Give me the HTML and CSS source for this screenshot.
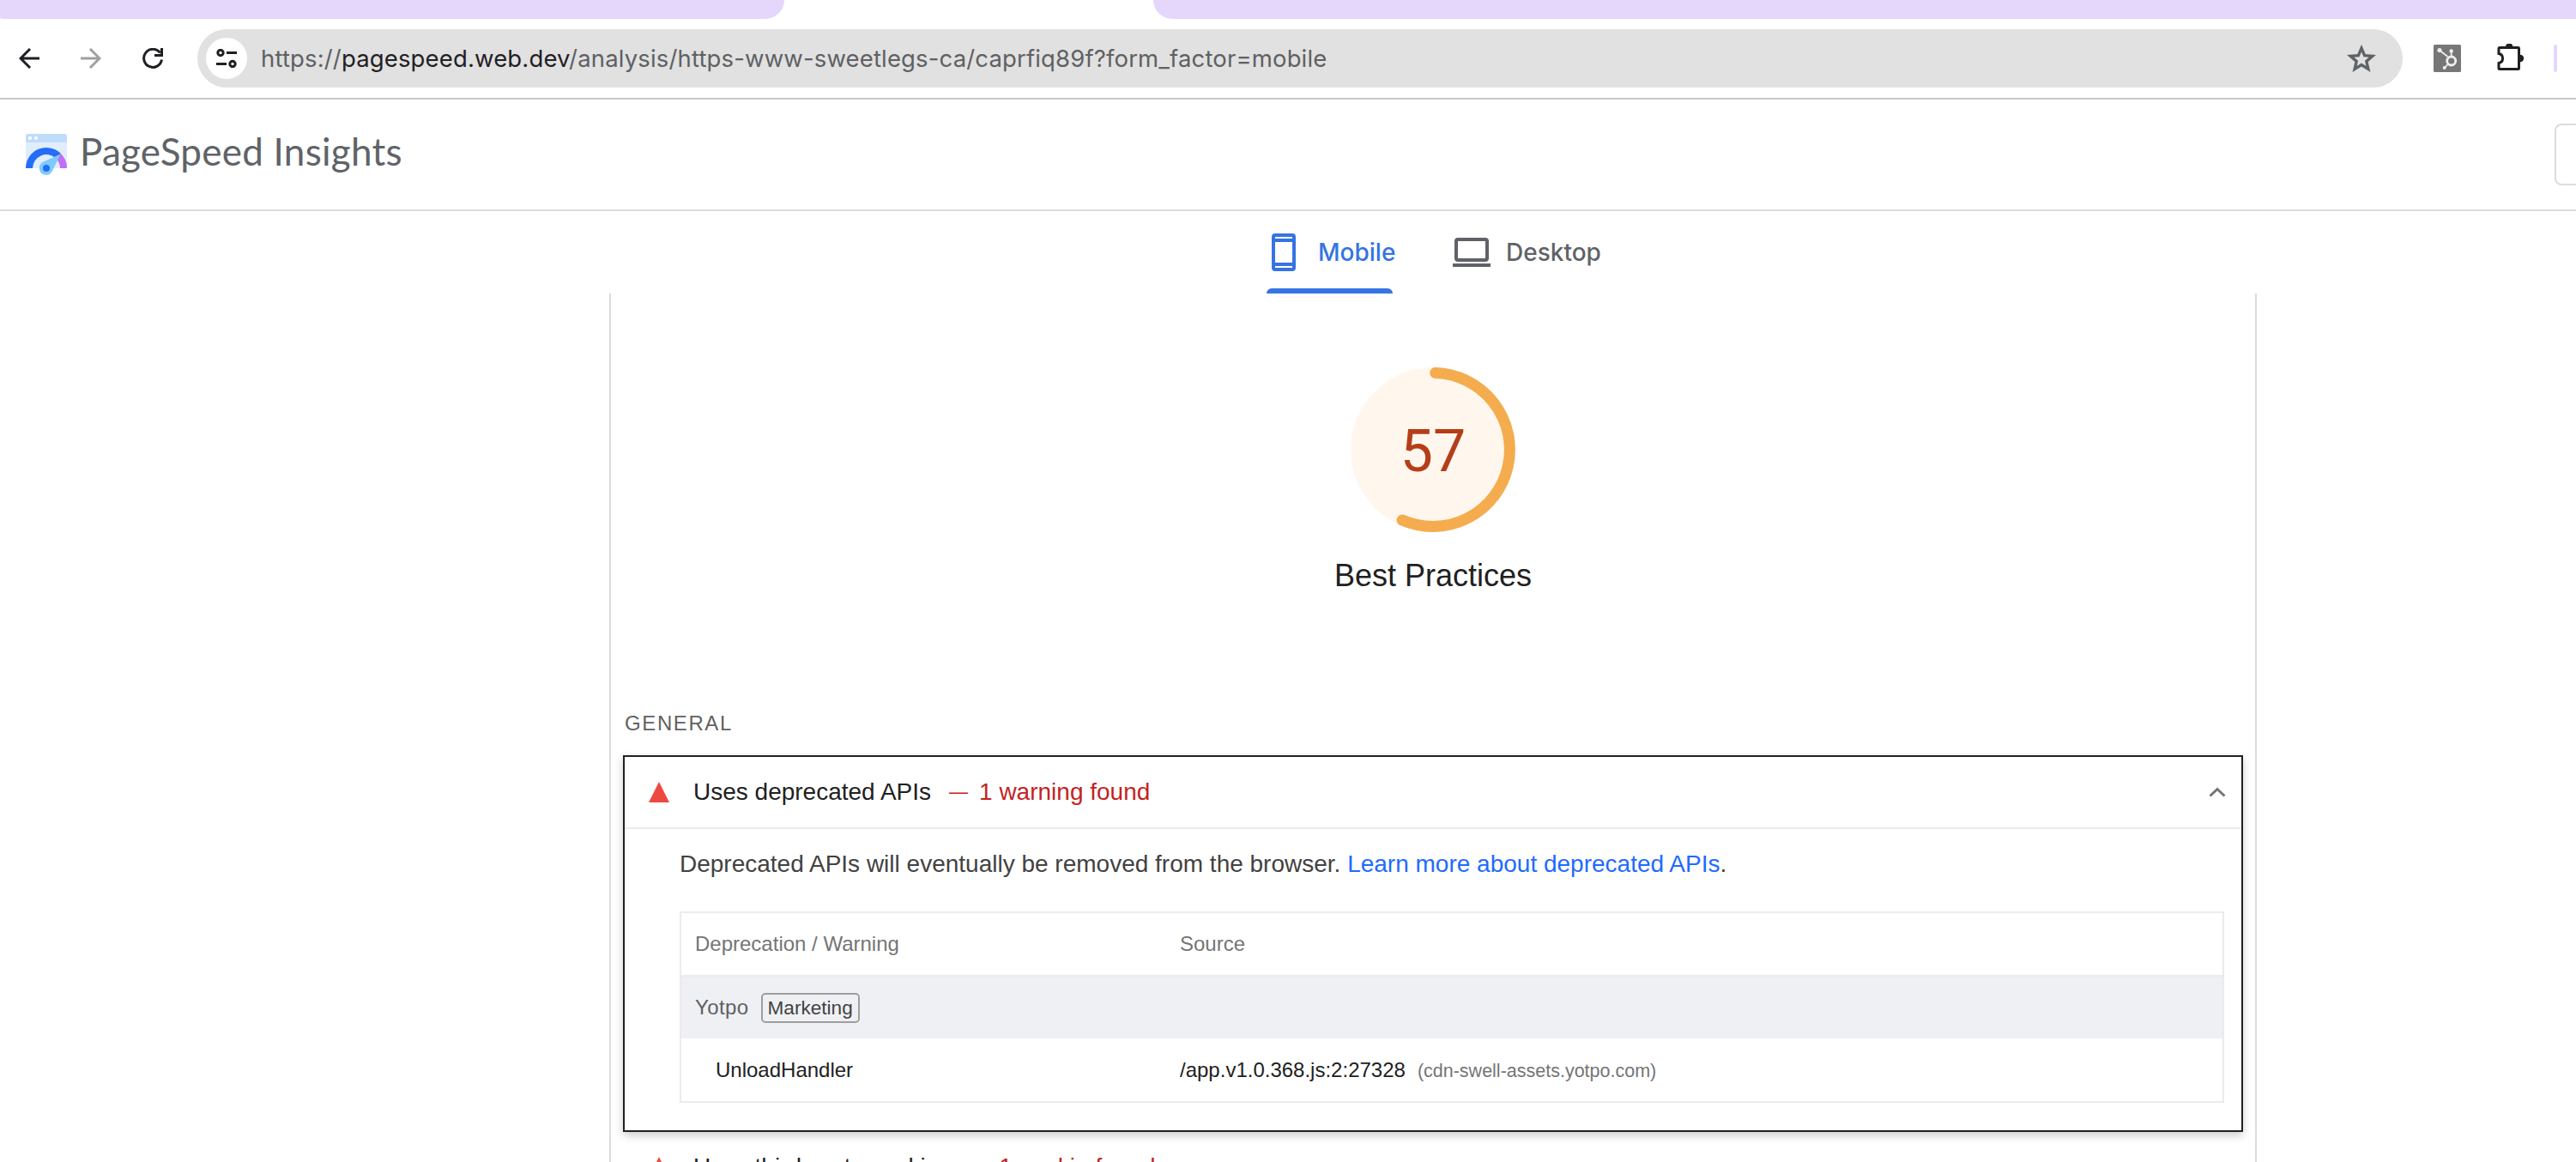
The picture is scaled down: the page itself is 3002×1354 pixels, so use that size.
FILE: index.html
```html
<!DOCTYPE html>
<html lang="en">

<head>
	<meta charset="UTF-8">
	<meta name="viewport" content="width=device-width, initial-scale=1.0">
	<title>PageSpeed Insights</title>
	<link rel="stylesheet" href="styles.css">
</head>

<body>
	<div class="tabstrip">
		<div class="tabstrip-left"></div>
		<div class="tabstrip-right"></div>
	</div>

	<div class="toolbar">
		<svg class="nav-icon" width="24" height="24" viewBox="0 0 24 24" fill="none" stroke="#1f2024" stroke-width="3">
			<path d="M24 12H3M13 1L2 12l11 11" />
		</svg>
		<svg class="nav-icon" width="24" height="24" viewBox="0 0 24 24" fill="none" stroke="#a0a0a1" stroke-width="3">
			<path d="M0 12h21M11 1l11 11-11 11" />
		</svg>
		<svg class="nav-icon" width="24" height="24" viewBox="0 0 24 24" fill="none" stroke="#1f2024" stroke-width="3">
			<path d="M20.500 5.500A10.500 10.500 0 1 0 22.500 13.500" />
			<path d="M22.500 0v8.500H14" />
		</svg>
		<div class="omnibox">
			<div class="site-info">
				<svg width="24" height="22" viewBox="0 0 24 22" fill="none" stroke="#1f2024" stroke-width="3">
					<circle cx="5" cy="4.500" r="3.200" />
					<path d="M12 4.500h12M0 17.500h12" />
					<circle cx="19" cy="17.500" r="3.200" />
				</svg>
			</div>
			<span class="url">https://<b>pagespeed.web.dev</b>/analysis/https-www-sweetlegs-ca/caprfiq89f?form_factor=mobile</span>
			<svg class="star" width="34" height="32" viewBox="0 0 34 32" fill="none" stroke="#5f6368" stroke-width="3.400">
				<path d="M17 4.200l3.600 8.400 9.200.8-7 6 2.100 9-7.900-4.800-7.900 4.800 2.100-9-7-6 9.200-.8z" />
			</svg>
		</div>
		<svg class="hubspot" width="32" height="32" viewBox="0 0 32 32">
			<rect width="32" height="32" rx="1.500" fill="#777" />
			<g fill="none" stroke="#eee" stroke-width="1.800">
				<path d="M7.500 7l9 7M20.700 8v6M16.500 23l-3.500 4" />
				<circle cx="20.700" cy="19" r="5" stroke-width="2.800" />
			</g>
			<g fill="#eee">
				<circle cx="7" cy="6.500" r="2.600" />
				<circle cx="20.700" cy="7.500" r="2.200" />
				<circle cx="12.700" cy="27" r="2" />
			</g>
		</svg>
		<svg class="puzzle" width="34" height="34" viewBox="0 0 34 34">
			<path d="M4 4.500h21.500a1 1 0 0 1 1 1V28.500a1 1 0 0 1-1 1H4a1 1 0 0 1-1-1V22.500a5.600 5.600 0 0 0 0-11V5.500a1 1 0 0 1 1-1z" fill="none" stroke="#1f2024" stroke-width="3" />
			<path d="M11 3.500a4.200 4.200 0 0 1 8.400 0zM28 12.800a4.200 4.200 0 0 1 0 8.400z" fill="#1f2024" />
		</svg>
		<div class="toolbar-divider"></div>
	</div>

	<header class="header">
		<svg class="logo" width="48" height="48" viewBox="0 0 48 48">
			<path d="M0 10h48v30H0z" fill="#e1edfd" />
			<path d="M0 10V3a3 3 0 0 1 3-3h42a3 3 0 0 1 3 3v7z" fill="#c0dcfb" />
			<circle cx="5" cy="5" r="2.100" fill="#fff" />
			<circle cx="12" cy="5" r="2.100" fill="#fff" />
			<path d="M0 40a24 24 0 0 1 41-17l-6 5.500A16 16 0 0 0 8 40z" fill="#246df7" />
			<path d="M40.500 22.500A24 24 0 0 1 48 40h-8a16 16 0 0 0-4-10.600z" fill="#bf6ff8" />
			<path d="M40.500 23.500L20 32.800a8 8 0 1 0 11 10.500z" fill="#7ecbfb" />
			<circle cx="24" cy="40" r="4" fill="#246df7" />
		</svg>
		<h1>PageSpeed Insights</h1>
		<div class="header-button"></div>
	</header>

	<nav class="tabs">
		<div class="tab tab-active">
			<svg width="28" height="44" viewBox="0 0 28 44" fill="none" stroke="currentColor" stroke-width="4">
				<rect x="2" y="2" width="24" height="40" rx="2" />
				<path d="M2 8h24M2 36h24" />
			</svg>
			<span>Mobile</span>
		</div>
		<div class="tab tab-desktop">
			<svg width="44" height="34" viewBox="0 0 44 34" fill="none" stroke="currentColor" stroke-width="4">
				<rect x="4" y="2" width="36" height="24" rx="2" />
				<path d="M0 32h44" />
			</svg>
			<span>Desktop</span>
		</div>
	</nav>

	<main class="report">
		<div class="gauge">
			<svg width="192" height="192" viewBox="0 0 192 192">
				<circle cx="96" cy="96" r="96" fill="#fff7ed" />
				<path d="M98.700 6.500A89.500 89.500 0 1 1 60.100 178" fill="none" stroke="#f4ac4e" stroke-width="13" stroke-linecap="round" />
			</svg>
			<div class="score">57</div>
		</div>
		<h2>Best Practices</h2>

		<h3>GENERAL</h3>

		<section class="audit audit-open">
			<div class="audit-header">
				<span class="fail"></span>
				<span class="title">Uses deprecated APIs</span>
				<span class="dash">—</span>
				<span class="display">1 warning found</span>
				<svg class="chevron" width="20" height="12" viewBox="0 0 20 12" fill="none" stroke="#757575" stroke-width="3">
					<path d="M1.500 10.500L10 2.500l8.500 8" />
				</svg>
			</div>
			<p>Deprecated APIs will eventually be removed from the browser. <a>Learn more about deprecated APIs</a>.</p>
			<div class="table">
				<div class="row row-head">
					<span>Deprecation / Warning</span>
					<span>Source</span>
				</div>
				<div class="row row-entity">
					<div><span class="entity">Yotpo</span><span class="badge">Marketing</span></div>
				</div>
				<div class="row">
					<span class="sub-item">UnloadHandler</span>
					<span><span class="source">/app.v1.0.368.js:2:27328</span><span class="host">(cdn-swell-assets.yotpo.com)</span></span>
				</div>
			</div>
		</section>

		<section class="audit">
			<div class="audit-header">
				<span class="fail"></span>
				<span class="title">Uses third-party cookies</span>
				<span class="dash">—</span>
				<span class="display">1 cookie found</span>
			</div>
		</section>
	</main>
</body>

</html>
```

FILE: styles.css
```css
* {
	margin: 0;
	padding: 0;
	box-sizing: border-box;
}

body {
	width: 3002px;
	height: 1354px;
	overflow: hidden;
	background: #fff;
	color: #212121;
	font-family: 'Liberation Sans', Arial, sans-serif;
	font-size: 28px;
}

svg {
	display: block;
	flex: none;
}

/* browser chrome */
.tabstrip {
	display: flex;
	justify-content: space-between;
	height: 22px;
}

.tabstrip-left,
.tabstrip-right {
	background: #e5d6fb;
}

.tabstrip-left {
	width: 914px;
	border-radius: 0 0 22px 2px;
}

.tabstrip-right {
	width: 1658px;
	border-radius: 0 0 0 22px;
}

.toolbar {
	display: flex;
	align-items: center;
	height: 94px;
	padding-left: 22px;
	border-bottom: 2px solid #c8c8c9;
}

.nav-icon {
	margin-right: 48px;
}

.omnibox {
	display: flex;
	flex: none;
	align-items: center;
	width: 2570px;
	height: 68px;
	margin-left: -8px;
	padding: 0 31px 0 10px;
	border-radius: 34px;
	background: #e1e1e1;
}

.site-info {
	display: flex;
	align-items: center;
	justify-content: center;
	width: 48px;
	height: 48px;
	margin-right: 16px;
	border-radius: 50%;
	background: #fff;
}

.url {
	font-family: Inter, sans-serif;
	font-size: 27.5px;
	letter-spacing: 0.15px;
	color: #5f6063;
	white-space: nowrap;
}

.url b {
	font-weight: 400;
	color: #1f2024;
}

.star {
	margin-left: auto;
}

.hubspot {
	margin-left: 36px;
}

.puzzle {
	margin-left: 41px;
}

.toolbar-divider {
	flex: none;
	width: 4px;
	height: 32px;
	margin-left: 33px;
	border-radius: 2px;
	background: #e5d6fb;
}

/* page header */
.header {
	display: flex;
	align-items: center;
	height: 130px;
	padding-left: 30px;
	border-bottom: 2px solid #dadce0;
}

.header h1 {
	margin-left: 15px;
	padding-bottom: 8px;
	font-family: Lato, sans-serif;
	font-size: 44px;
	font-weight: 400;
	letter-spacing: 0.25px;
	color: #5f6368;
	white-space: nowrap;
}

.header-button {
	flex: none;
	width: 100px;
	height: 72px;
	margin: 0 -75px 0 auto;
	border: 2px solid #dadce0;
	border-radius: 8px;
}

.tabs {
	display: flex;
	height: 96px;
	padding-left: 1476px;
	font-family: Inter, sans-serif;
	font-weight: 500;
	color: #5f6368;
}

.tab {
	display: flex;
	align-items: center;
}

.tab-active {
	position: relative;
	width: 147px;
	padding-left: 6px;
	color: #3574e2;
}

.tab-active::after {
	content: '';
	position: absolute;
	left: 0;
	bottom: 0;
	width: 147px;
	height: 6px;
	border-radius: 6px 6px 0 0;
	background: #3574e2;
}

.tab-active span {
	margin-left: 26px;
}

.tab-desktop {
	margin-left: 70px;
}

.tab-desktop span {
	margin-left: 18px;
}

/* report */
.report {
	width: 1920px;
	height: 1012px;
	margin-left: 710px;
	padding: 86px 14px 0;
	border: solid #dadce0;
	border-width: 0 2px;
	overflow: hidden;
}

.gauge {
	position: relative;
	width: 192px;
	margin: 0 auto;
}

.score {
	position: absolute;
	inset: 0;
	font-family: Roboto, sans-serif;
	font-size: 68px;
	line-height: 196px;
	text-align: center;
	color: #b63d1a;
}

h2 {
	margin-top: 31px;
	font-size: 36px;
	font-weight: 400;
	line-height: 40px;
	text-align: center;
}

h3 {
	margin: 138px 0 23px 2px;
	font-size: 24px;
	font-weight: 400;
	line-height: 28px;
	letter-spacing: 1.6px;
	color: #616161;
}

.audit-open {
	height: 439px;
	border: 2px solid #212121;
	box-shadow: 0 4px 10px rgba(0, 0, 0, 0.2);
}

.audit-header {
	display: flex;
	align-items: center;
	height: 84px;
	padding: 0 18px 0 28px;
	border-bottom: 2px solid #ebebeb;
	white-space: nowrap;
}

.audit:not(.audit-open) .audit-header {
	padding-left: 30px;
}

.fail {
	border: 12px solid transparent;
	border-top: 0;
	border-bottom: 24px solid #ee4941;
}

.title {
	margin-left: 28px;
}

.dash {
	width: 22px;
	margin: 0 13px 0 21px;
	font-size: 22px;
	color: #c5221f;
}

.display {
	color: #c5221f;
}

.chevron {
	margin-left: auto;
}

.audit p {
	margin: 24px 64px 38px;
	line-height: 34px;
	color: #424242;
}

.audit a {
	color: #1f6bff;
}

.table {
	width: 1800px;
	margin-left: 64px;
	border: 2px solid #ebebeb;
	font-size: 24px;
}

.row {
	display: grid;
	grid-template-columns: 565px 1fr;
	align-items: center;
	height: 73px;
	padding-left: 16px;
}

.row-head {
	height: 74px;
	border-bottom: 2px solid #ebebeb;
	color: #757575;
}

.row-entity {
	height: 72px;
	background: #eff0f4;
}

.entity {
	letter-spacing: 0.4px;
	color: #616161;
}

.badge {
	display: inline-block;
	margin-left: 14px;
	padding: 0 6px;
	border: 2px solid #9e9e9e;
	border-radius: 5px;
	font-size: 22.6px;
	line-height: 31px;
	color: #424242;
}

.sub-item {
	padding-left: 24px;
}

.host {
	margin-left: 14px;
	font-size: 21.5px;
	color: #757575;
}
```
